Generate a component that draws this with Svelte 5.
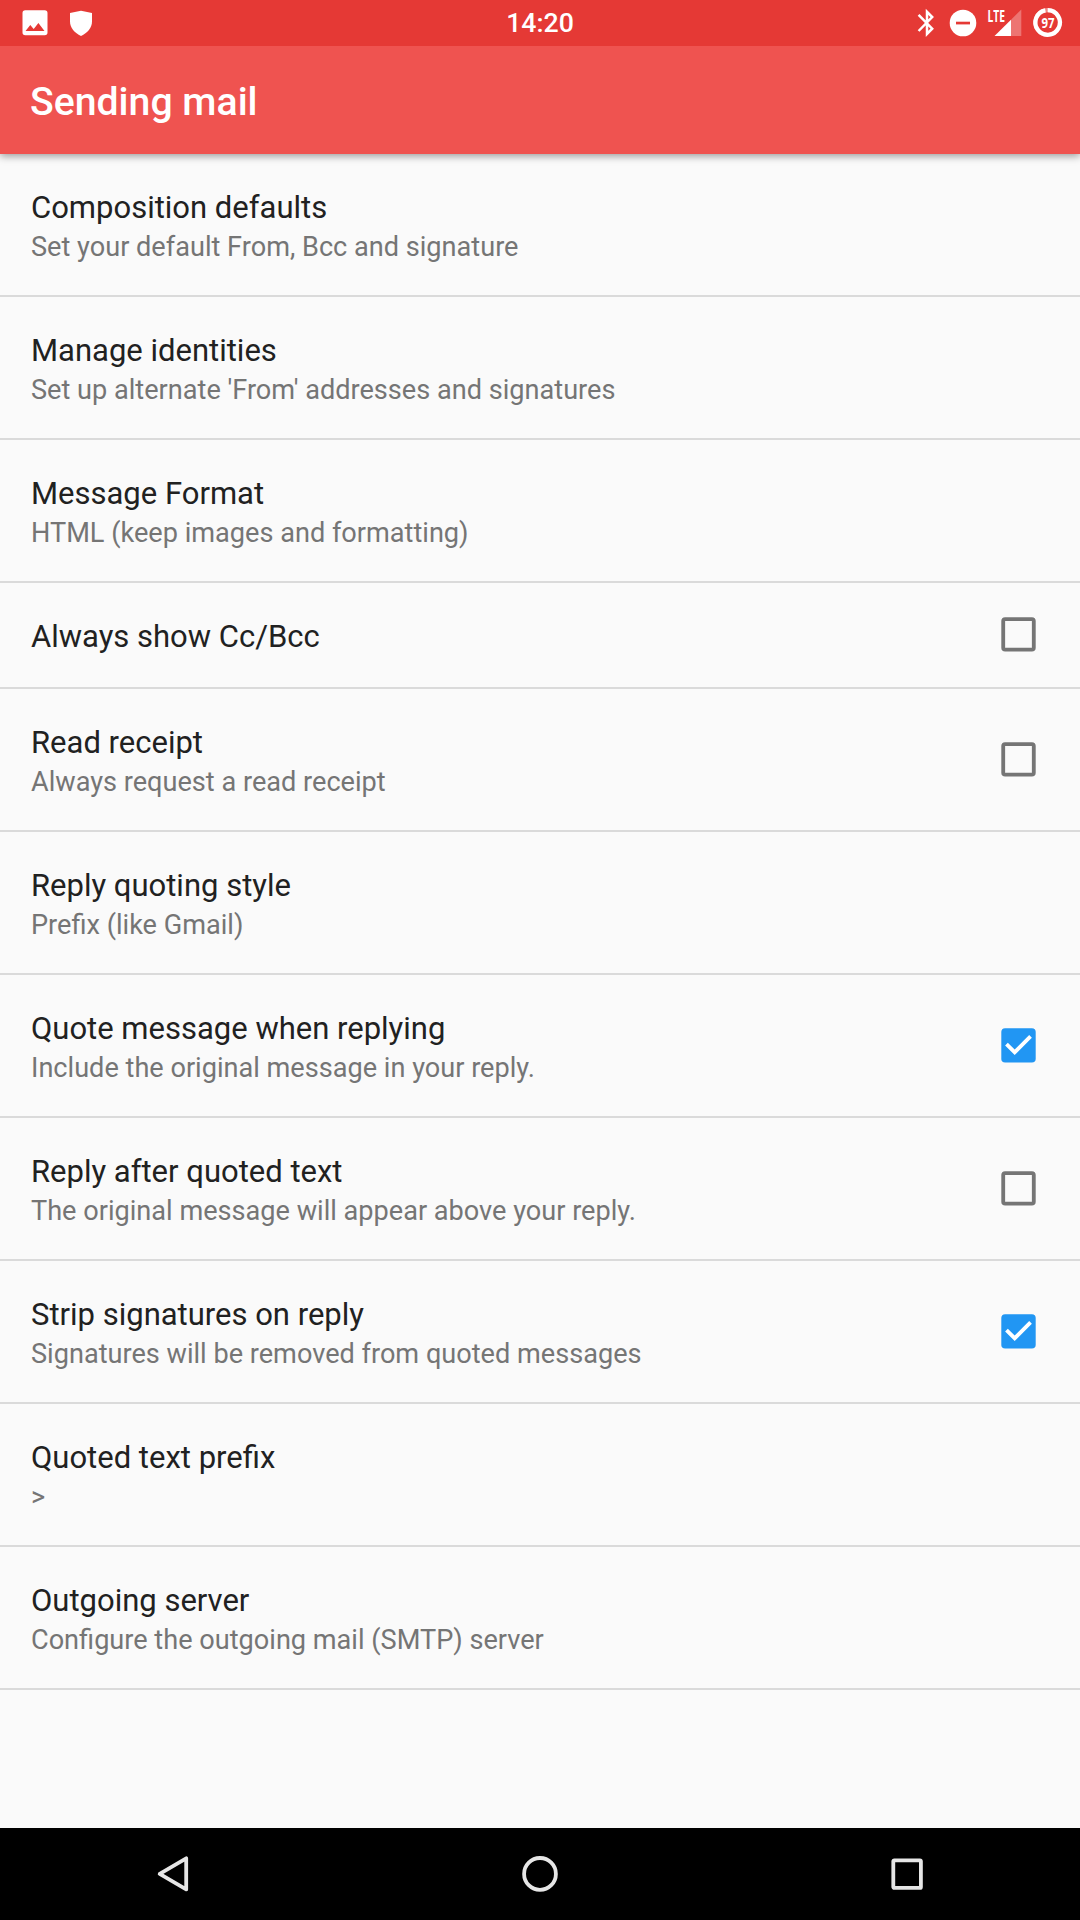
<script>
  const settings = [
    { title: 'Composition defaults', summary: 'Set your default From, Bcc and signature' },
    { title: 'Manage identities', summary: "Set up alternate 'From' addresses and signatures" },
    { title: 'Message Format', summary: 'HTML (keep images and formatting)' },
    { title: 'Always show Cc/Bcc', checked: false },
    { title: 'Read receipt', summary: 'Always request a read receipt', checked: false },
    { title: 'Reply quoting style', summary: 'Prefix (like Gmail)' },
    { title: 'Quote message when replying', summary: 'Include the original message in your reply.', checked: true },
    { title: 'Reply after quoted text', summary: 'The original message will appear above your reply.', checked: false },
    { title: 'Strip signatures on reply', summary: 'Signatures will be removed from quoted messages', checked: true },
    { title: 'Quoted text prefix', summary: '>' },
    { title: 'Outgoing server', summary: 'Configure the outgoing mail (SMTP) server' }
  ];
</script>

<div class="screen">
  <div class="status">
    <svg class="side" width="120" height="46" viewBox="0 0 120 46">
      <path fill="#fff" fill-rule="evenodd" d="M25.3 10.3h19.4a2.8 2.8 0 0 1 2.8 2.8v19.4a2.8 2.8 0 0 1-2.8 2.8H25.3a2.8 2.8 0 0 1-2.8-2.8V13.1a2.8 2.8 0 0 1 2.8-2.8zM25.5 31.1h19l-6.1-8.2-4.7 6.2-3.4-4.1z" />
      <path fill="#fff" d="M81 10.8l11 2.1v8.6c0 6-4.5 11.5-11 14.5-6.5-3-11-8.5-11-14.5v-8.6z" />
    </svg>
    <span class="clock">14:20</span>
    <svg class="side right" width="180" height="46" viewBox="0 0 180 46">
      <path fill="none" stroke="#fff" stroke-width="2.5" d="M18.6 14.8L32.2 28.7 27 34V11.8l5.2 5.2L18.6 31" />
      <circle cx="63" cy="23" r="13.3" fill="#fff" />
      <path fill="#e53935" d="M56 21.7h14v2.7H56z" />
      <path fill="#fff" fill-opacity=".3" d="M111 19.7L121.3 9.5V36H111z" />
      <path fill="#fff" d="M94.5 36L111 19.7V36z" />
      <text class="lte" x="87.5" y="21.8" textLength="17.5" lengthAdjust="spacingAndGlyphs">LTE</text>
      <circle cx="147.7" cy="22.5" r="12.3" fill="none" stroke="#fff" stroke-opacity=".4" stroke-width="4.2" />
      <path fill="none" stroke="#fff" stroke-width="4.2" d="M147.7 10.2A12.3 12.3 0 1 1 145.4 10.4" />
      <text class="battery" x="141.5" y="27.8" textLength="13" lengthAdjust="spacingAndGlyphs">97</text>
    </svg>
  </div>
  <header><h1>Sending mail</h1></header>
  <main>
    {#each settings as item}
      <div class="row" class:single={!item.summary}>
        <div class="text">
          <div class="title">{item.title}</div>
          {#if item.summary}<div class="summary">{item.summary}</div>{/if}
        </div>
        {#if item.checked !== undefined}
          <svg class="check" viewBox="0 0 46 46">
            <g transform="translate(.57 .47) scale(1.911)">
              {#if item.checked}
                <rect x="3" y="3" width="18" height="18" rx="2" fill="#2196f3" />
                <path fill="#fff" d="M10 17l-5-5 1.41-1.41L10 14.17l7.59-7.59L19 8z" />
              {:else}
                <rect x="4" y="4" width="16" height="16" rx="1" fill="none" stroke="#757575" stroke-width="2" />
              {/if}
            </g>
          </svg>
        {/if}
      </div>
    {/each}
  </main>
  <nav>
    <svg width="46" height="46" viewBox="0 0 46 46"><path d="M36.2 7.3V38.4L9.7 22.9z" /></svg>
    <svg width="46" height="46" viewBox="0 0 46 46"><circle cx="23" cy="22.9" r="15.9" /></svg>
    <svg width="46" height="46" viewBox="0 0 46 46"><rect x="9.3" y="9.3" width="27.6" height="27.6" rx="1" /></svg>
  </nav>
</div>

<style>
  :global(body) { margin: 0; }
  .screen {
    display: flex;
    flex-direction: column;
    width: 1080px;
    height: 1920px;
    overflow: hidden;
    background: #fafafa;
    font-family: Roboto, sans-serif;
  }
  .status {
    display: grid;
    grid-template-columns: 1fr auto 1fr;
    align-items: center;
    flex: none;
    height: 46px;
    background: #e53935;
    color: #fff;
    z-index: 2;
  }
  .side { display: block; }
  .right { justify-self: end; }
  .clock { padding-top: 1px; font-size: 26.7px; font-weight: 500; line-height: 45px; }
  .lte { font: 700 16.5px 'Open Sans', sans-serif; fill: #fff; }
  .battery { font: 700 14px 'Open Sans', sans-serif; fill: #fff; }
  header {
    display: flex;
    align-items: center;
    flex: none;
    box-sizing: border-box;
    height: 108px;
    padding: 4px 30px 0;
    background: #ef5350;
    box-shadow: 0 2px 8px rgba(0, 0, 0, 0.4);
    color: #fff;
    z-index: 1;
  }
  h1 { margin: 0; font-size: 39.2px; font-weight: 500; line-height: 46px; }
  main { flex: 1; }
  .row {
    display: flex;
    align-items: center;
    box-sizing: border-box;
    height: 143px;
    padding: 0 39px 0 31px;
    border-bottom: 2px solid #dadada;
  }
  .single { height: 106px; }
  .text { flex: 1; padding-top: 5px; }
  .single .text { padding-top: 3px; }
  .title { font-size: 31px; line-height: 37px; color: #212121; }
  .summary { padding-top: 3px; font-size: 27.13px; line-height: 37px; color: #757575; }
  .check { flex: none; width: 46px; height: 46px; margin-bottom: 1px; }
  .single .check { margin-bottom: 2px; }
  nav {
    display: flex;
    align-items: center;
    justify-content: space-between;
    flex: none;
    box-sizing: border-box;
    height: 92px;
    padding: 0 150px;
    background: #000;
  }
  nav svg { fill: none; stroke: #e6e6e6; stroke-width: 3.8px; stroke-linejoin: round; }
</style>
